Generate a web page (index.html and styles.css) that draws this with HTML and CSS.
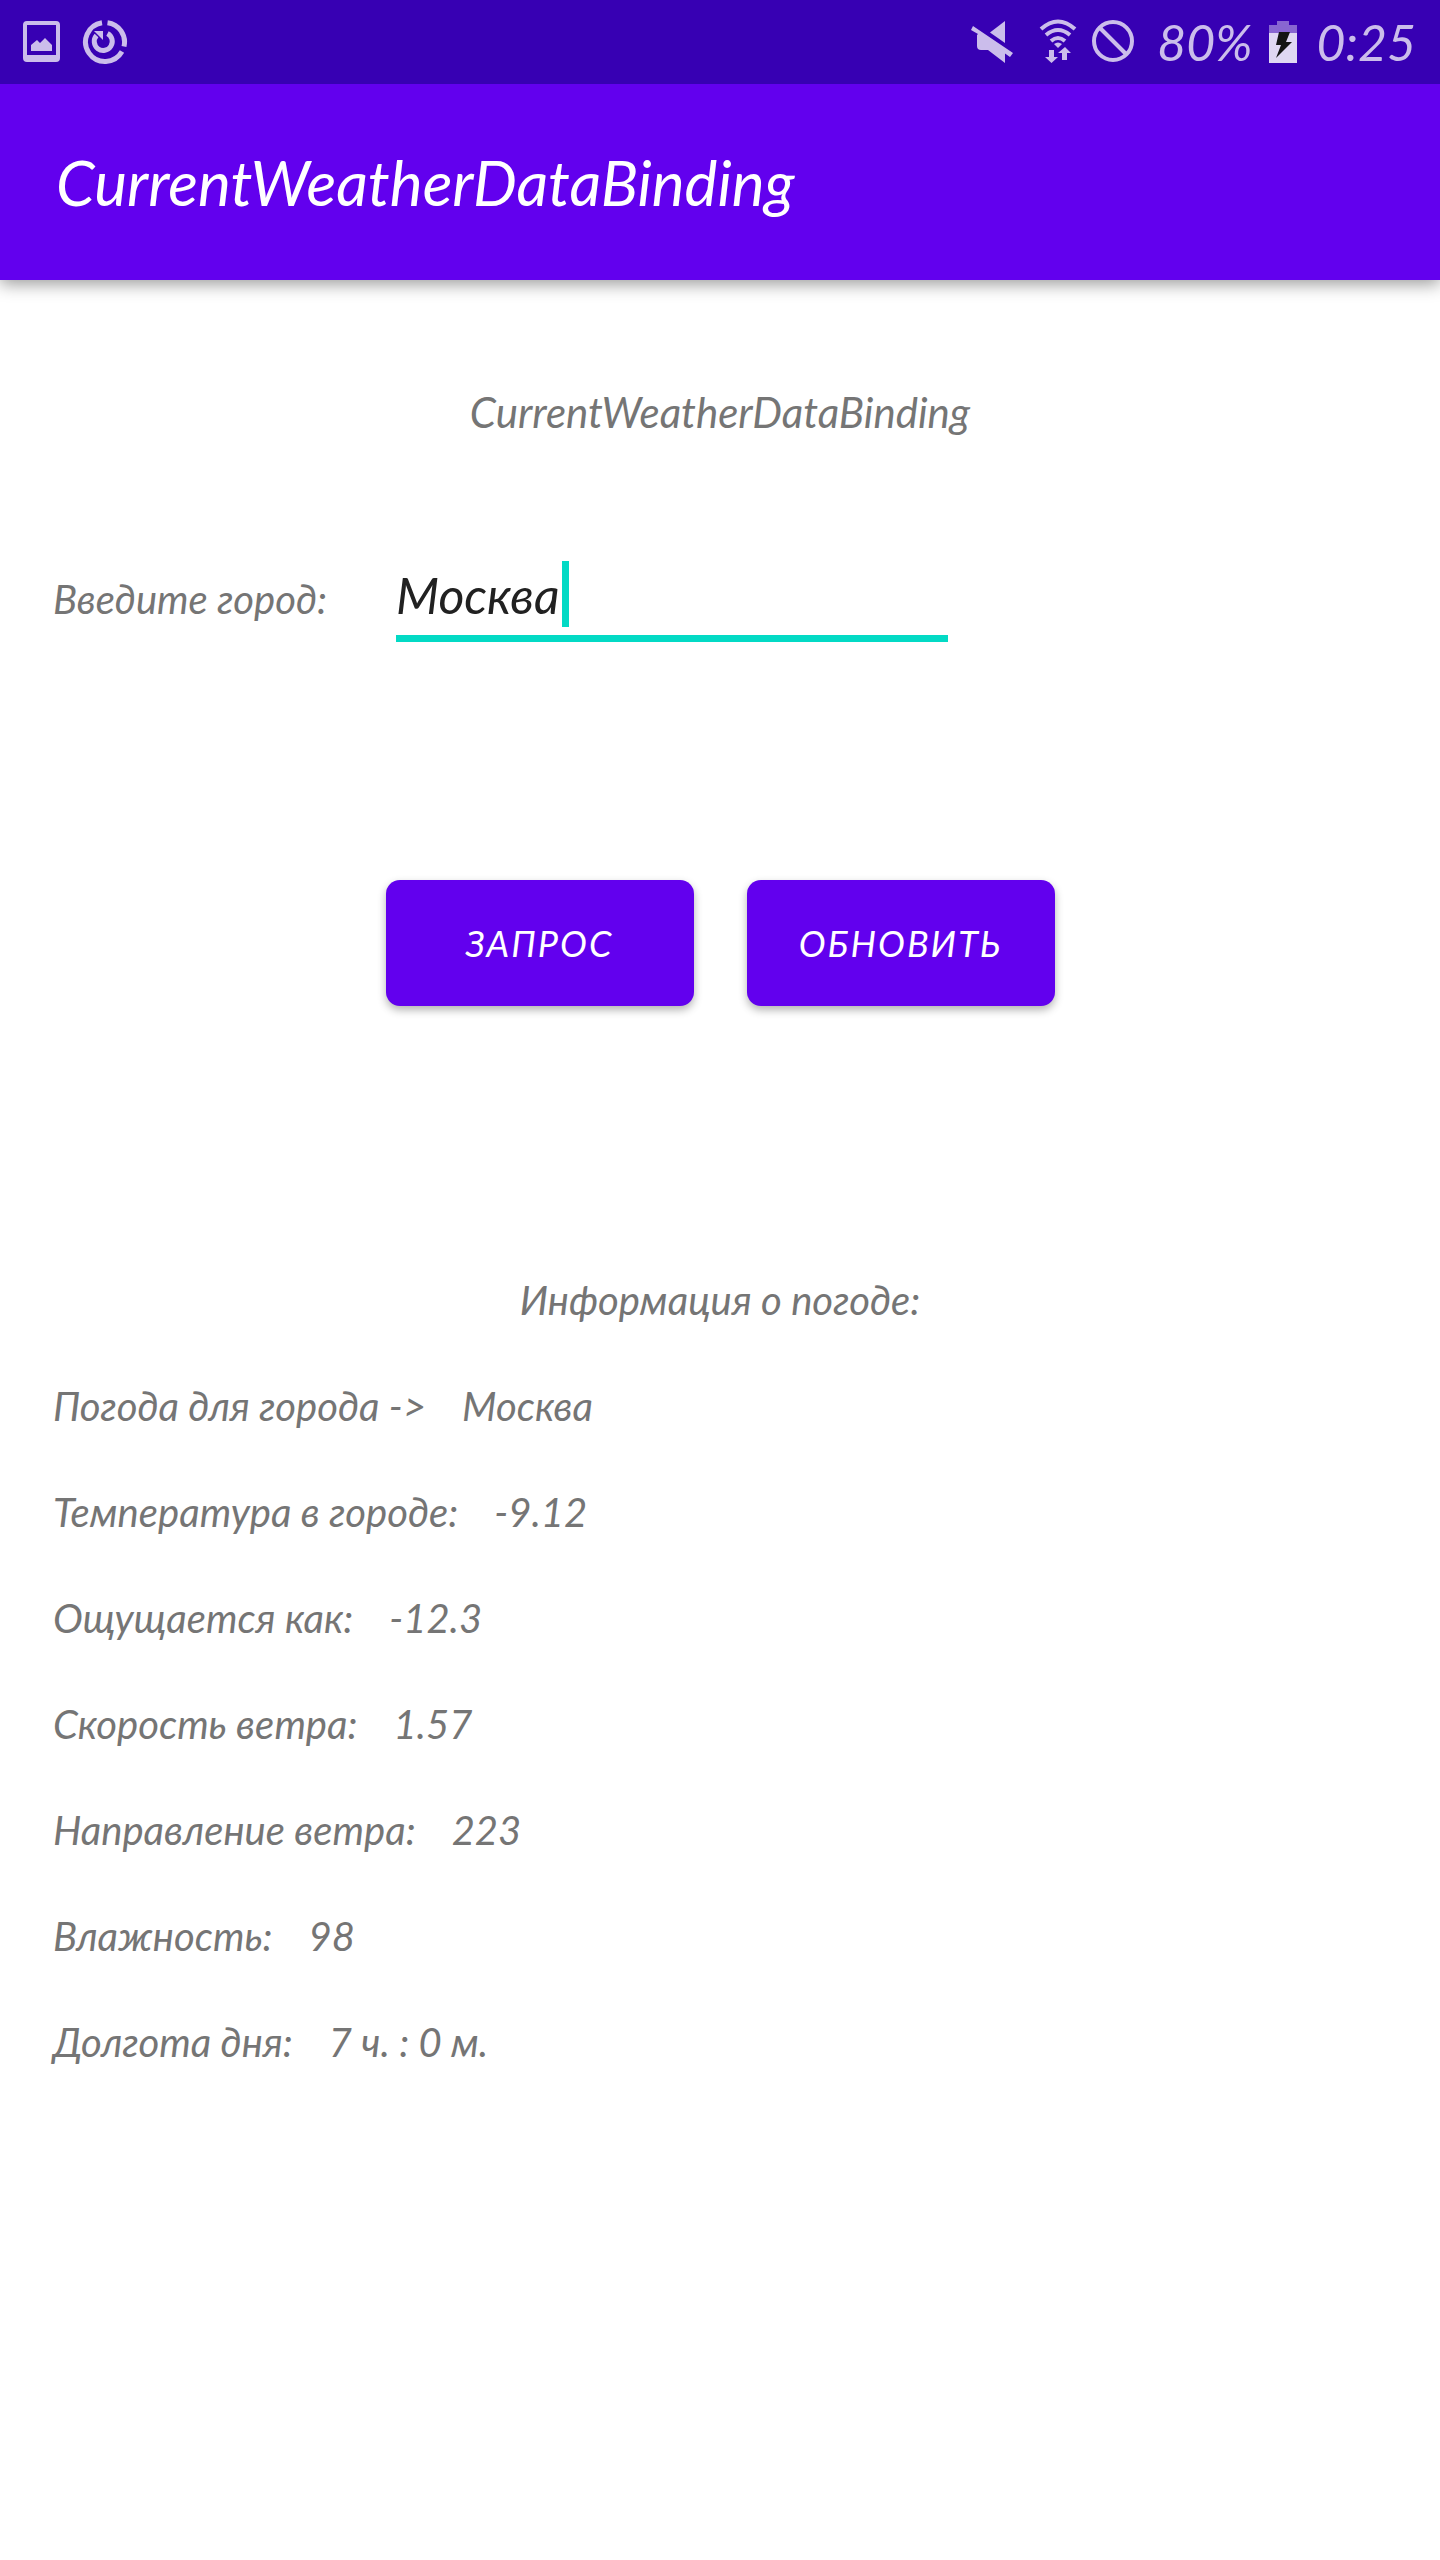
FILE: index.html
```html
<!DOCTYPE html>
<html lang="ru">
<head>
<meta charset="utf-8">
<meta name="viewport" content="width=device-width, initial-scale=1">
<title>CurrentWeatherDataBinding</title>
<link rel="stylesheet" href="styles.css">
</head>
<body>
<div class="status-bar">
  <div class="status-group notifications">
    <svg class="icon" width="40" height="44" viewBox="0 0 40 44" aria-hidden="true">
      <path fill-rule="evenodd" d="M5 1H34Q38 1 38 5V38Q38 42 34 42H5Q1 42 1 38V5Q1 1 5 1ZM5 5V35H34V5Z"/>
      <path d="M9 31V25L15 20L18 23L23 18L30 25V31Z"/>
    </svg>
    <svg class="icon" width="46" height="46" viewBox="0 0 46 46" aria-hidden="true">
      <g class="stroke" stroke-width="5">
        <path d="M20 3.700A19.500 19.500 0 1 0 40 32.600"/>
        <path d="M25.500 3.700A19.500 19.500 0 0 1 42 27.500"/>
        <path d="M14.500 16.500A9 9 0 1 0 25.500 14.500"/>
      </g>
      <path d="M12 12H21V21Z"/>
    </svg>
  </div>
  <div class="status-group system">
    <svg class="icon mute" width="44" height="46" viewBox="0 0 44 46" aria-hidden="true">
      <path d="M34 2V24L19 13.500Z"/>
      <path d="M2 7L42 34L39 38L34 34.500V44L17 31H10Q6 31 6 27V16L7 15L0 11Z"/>
    </svg>
    <svg class="icon wifi" width="38" height="46" viewBox="0 0 38 46" aria-hidden="true">
      <g class="stroke" stroke-width="4">
        <path d="M2 10Q19 -5 36 10"/>
        <path d="M7 16Q19 6 31 16"/>
        <path d="M12 22Q19 16 26 22"/>
      </g>
      <path d="M15 25Q19 22 23 25L19 29Z"/>
      <path d="M10 31H15V38H19L12.500 44L6 38H10Z"/>
      <path d="M23 41V34H19L26 28L32 34H28V41Z"/>
    </svg>
    <svg class="icon" width="44" height="46" viewBox="0 0 44 46" aria-hidden="true">
      <g class="stroke" stroke-width="4">
        <circle cx="22" cy="22" r="19"/>
        <path d="M9 9L35 35"/>
      </g>
    </svg>
    <span class="battery-level">80%</span>
    <svg class="battery" width="28" height="44" viewBox="0 0 28 44" aria-hidden="true">
      <path class="battery-empty" d="M8 1H20V5H28V13H0V5H8Z"/>
      <path class="battery-full" d="M0 13H28V43H0Z"/>
      <path class="battery-bolt" d="M10 12H21L17 22H23L7 38L12 25H7Z"/>
    </svg>
    <time class="clock">0:25</time>
  </div>
</div>
<header class="app-bar">
  <h1 class="app-title">CurrentWeatherDataBinding</h1>
</header>
<main class="content">
  <h2 class="heading">CurrentWeatherDataBinding</h2>
  <form class="city-form">
    <div class="city-row">
      <label class="city-label" for="city">Введите город:</label>
      <div class="city-field">
        <input class="city-input" id="city" type="text" value="Москва">
        <span class="caret"></span>
      </div>
    </div>
    <div class="actions">
      <button class="button" type="submit">ЗАПРОС</button>
      <button class="button" type="button">ОБНОВИТЬ</button>
    </div>
  </form>
  <h2 class="heading">Информация о погоде:</h2>
  <dl class="weather">
    <div class="weather-row"><dt>Погода для города -&gt;</dt><dd>Москва</dd></div>
    <div class="weather-row"><dt>Температура в городе:</dt><dd>-9.12</dd></div>
    <div class="weather-row"><dt>Ощущается как:</dt><dd>-12.3</dd></div>
    <div class="weather-row"><dt>Скорость ветра:</dt><dd>1.57</dd></div>
    <div class="weather-row"><dt>Направление ветра:</dt><dd>223</dd></div>
    <div class="weather-row"><dt>Влажность:</dt><dd>98</dd></div>
    <div class="weather-row"><dt>Долгота дня:</dt><dd>7 ч. : 0 м.</dd></div>
  </dl>
</main>
</body>
</html>
```
FILE: styles.css
```css
* {
  box-sizing: border-box;
}

body {
  margin: 0;
  background: #fff;
  color: #757575;
  font-family: Lato, "Open Sans", sans-serif;
  font-style: italic;
  font-size: 40px;
  line-height: 50px;
}

h1, h2, dl, dd {
  margin: 0;
  font-weight: 400;
}

.status-bar {
  position: relative;
  z-index: 1;
  display: flex;
  justify-content: space-between;
  align-items: center;
  height: 84px;
  padding: 0 24px 0 22px;
  background: #3700b3;
  color: #cbbdeb;
  font-size: 50px;
}

.status-group {
  display: flex;
  align-items: center;
}

.notifications {
  gap: 20px;
}

.icon {
  fill: #cbbdeb;
}

.stroke {
  fill: none;
  stroke: #cbbdeb;
}

.mute {
  margin-right: 24px;
}

.wifi {
  margin-right: 14px;
}

.battery-level {
  margin: 0 16px 0 22px;
}

.clock {
  margin-left: 20px;
}

.battery-empty {
  fill: #8866d1;
}

.battery-full {
  fill: #dfd7f3;
}

.battery-bolt {
  fill: #141414;
}

.app-bar {
  display: flex;
  align-items: center;
  height: 196px;
  padding: 0 56px;
  background: #6200ee;
  color: #fff;
  box-shadow: 0 4px 16px rgba(0, 0, 0, 0.4);
}

.app-title {
  font-size: 62px;
  line-height: 72px;
}

.content {
  padding: 107px 53px;
}

.heading {
  font-size: 40px;
  line-height: 50px;
  text-align: center;
}

.heading:first-child {
  font-size: 42px;
}

.city-form {
  padding: 111px 0 269px;
}

.city-row {
  display: flex;
  align-items: center;
}

.city-label {
  flex: 0 0 343px;
  padding-top: 8px;
}

.city-field {
  position: relative;
  flex: 0 1 552px;
}

.city-input {
  display: block;
  width: 100%;
  height: 94px;
  padding: 6px 0 0;
  border: 0;
  border-bottom: 7px solid #03dac5;
  outline: 0;
  background: none;
  color: #212121;
  font: inherit;
  font-size: 50px;
}

.caret {
  position: absolute;
  left: 166px;
  top: 13px;
  width: 7px;
  height: 66px;
  background: #03dac5;
}

.actions {
  display: flex;
  justify-content: center;
  gap: 53px;
  padding-top: 238px;
}

.button {
  width: 308px;
  height: 126px;
  padding: 0;
  border: 0;
  border-radius: 14px;
  background: #6200ee;
  box-shadow: 0 4px 8px rgba(0, 0, 0, 0.3);
  color: #fff;
  font: inherit;
  font-size: 36px;
  letter-spacing: 2px;
}

.weather {
  display: grid;
  gap: 56px;
  padding-top: 56px;
}

.weather-row {
  display: flex;
  gap: 36px;
}
```
